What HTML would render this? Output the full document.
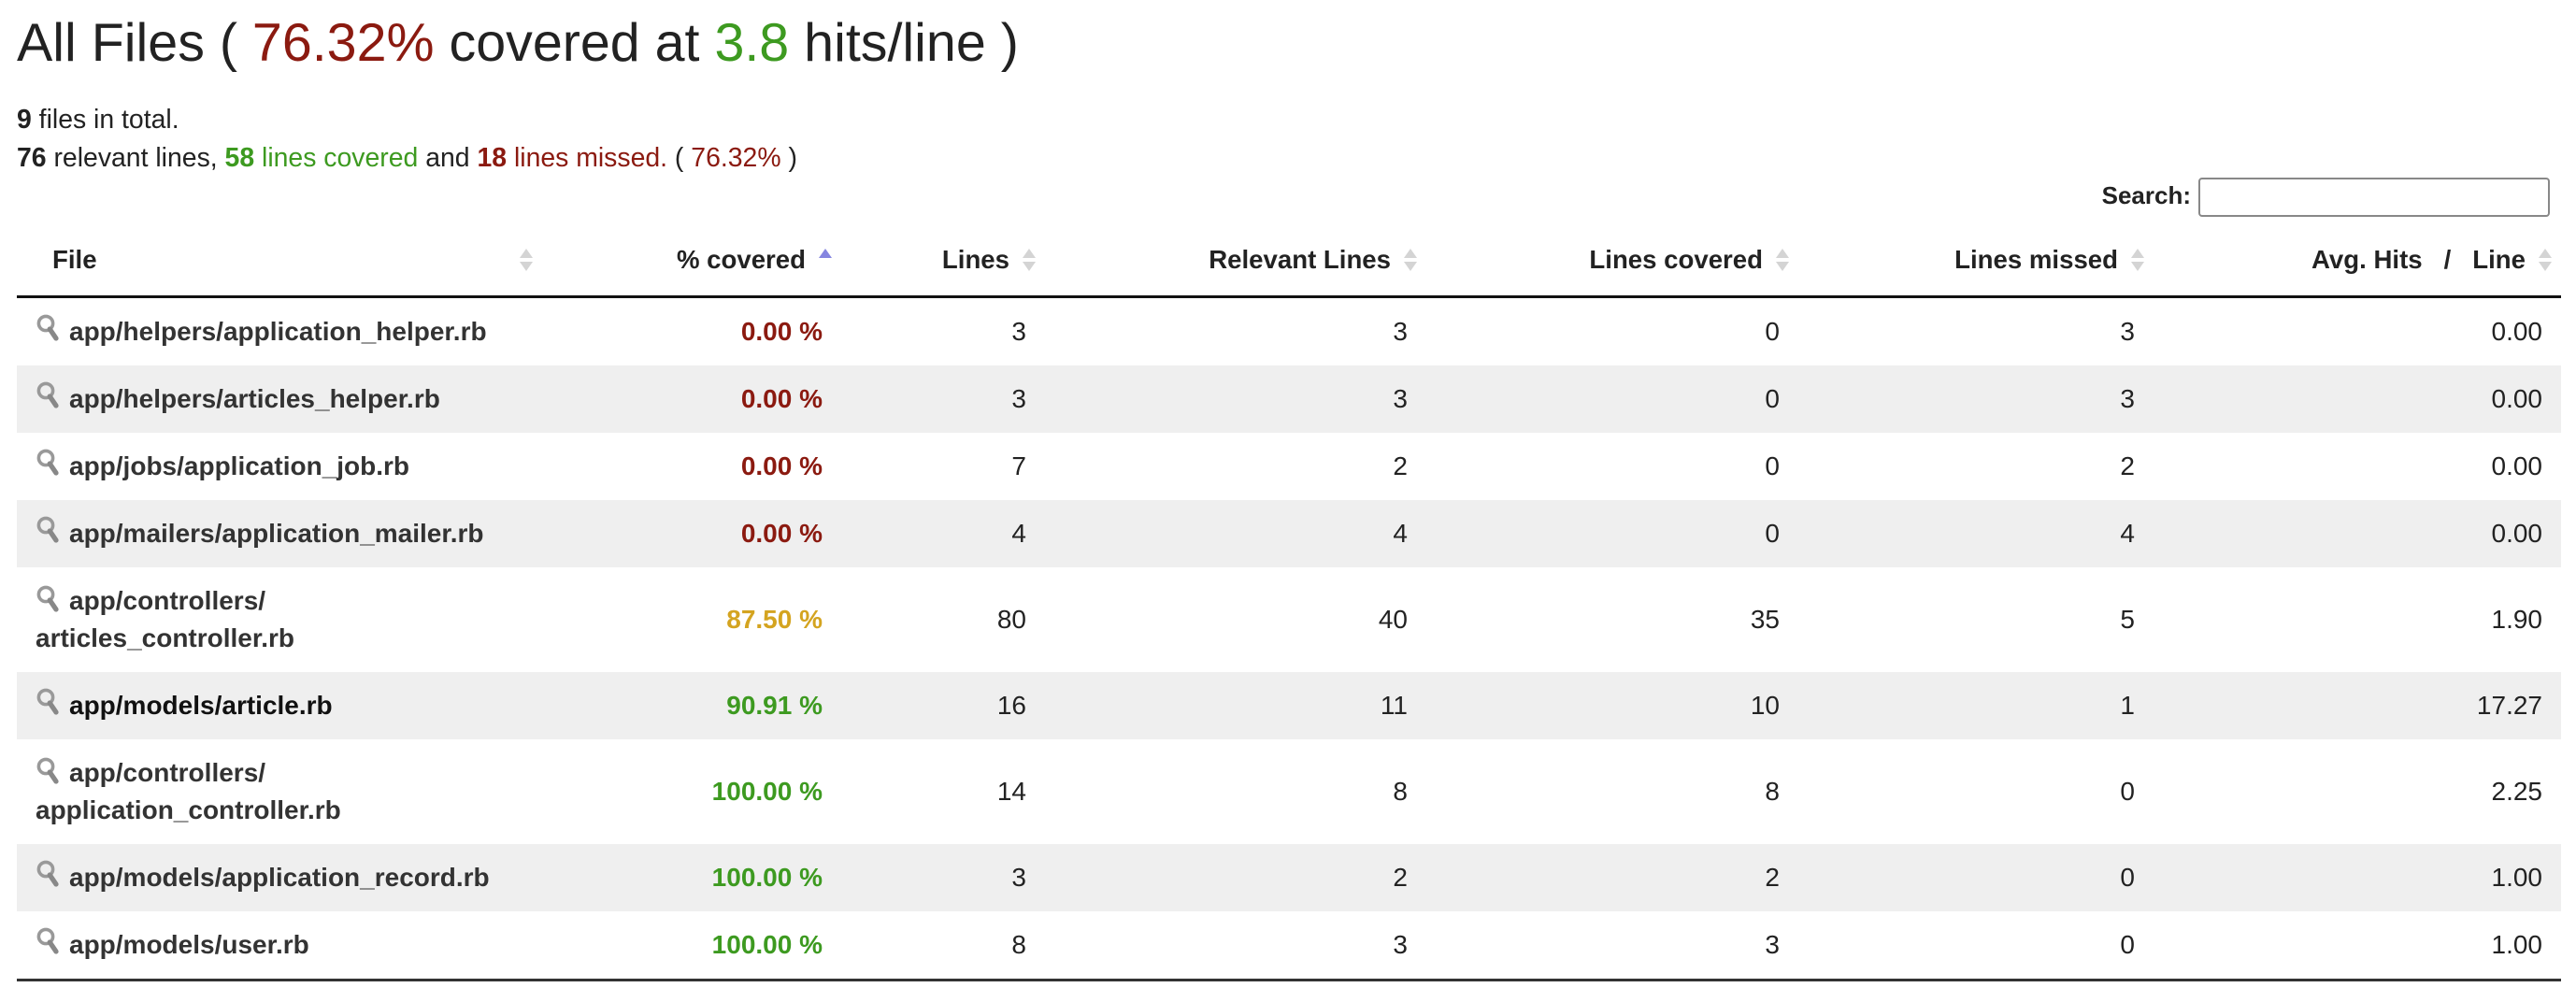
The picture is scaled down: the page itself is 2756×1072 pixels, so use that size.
<!DOCTYPE html>
<html><head><meta charset="utf-8"><style>
html{zoom:2}
body{margin:0;background:#fff;font-family:"Liberation Sans",sans-serif;color:#222;width:1378px;height:536px;position:relative;overflow:hidden}
.red{color:#8B1A10}.green{color:#3D9A20}.yel{color:#D4A420}
h2{position:absolute;left:9px;top:7px;margin:0;font-weight:normal;font-size:28.7px;line-height:32px;color:#222}
.stats{position:absolute;left:9px;top:54px;font-size:14.2px;line-height:20.5px}
.search{position:absolute;right:14px;top:95px;font-size:13px;font-weight:bold}
.search input{width:186px;height:19px;border:1px solid #888;border-radius:2px;margin-left:4px;vertical-align:middle;padding:0}
table{position:absolute;left:9px;top:120px;border-collapse:collapse;table-layout:fixed;width:1361px;font-size:14px}
th{height:38px;border-bottom:1.5px solid #111;text-align:right;padding:0 19px 0 0;position:relative;font-weight:bold;vertical-align:middle;font-size:13.8px}
th.f{text-align:left;padding-left:19px}
th .s{position:absolute;right:12px;top:13px;width:0;height:0}
th .s:before{content:"";position:absolute;left:0;top:0;border:3.5px solid transparent;border-bottom:5px solid #d4d4d4;border-top:0}
th .s:after{content:"";position:absolute;left:0;top:7px;border:3.5px solid transparent;border-top:5px solid #d4d4d4;border-bottom:0}
th .s.up:before{border-bottom-color:#8585e0}
th .s.up:after{display:none}
td{text-align:right;padding:8px 10px 8px 0;line-height:20px;vertical-align:middle}
td.f{text-align:left;padding-left:28px;font-weight:bold;position:relative;color:#333}
td.p{font-weight:bold}
tr.g td{background:#efefef}
tbody tr:last-child td{border-bottom:1.5px solid #333}
.ic{position:absolute;left:10px;width:13px;height:15px}
td.f.two .ic{top:9px}
</style></head><body>
<h2>All Files ( <span class="red">76.32%</span> covered at <span class="green">3.8</span> hits/line )</h2>
<div class="stats"><b>9</b> files in total.<br><b>76</b> relevant lines, <span class="green"><b>58</b> lines covered</span> and <span class="red"><b>18</b> lines missed.</span> ( <span class="red">76.32%</span> )</div>
<div class="search">Search:<input type="text"></div>
<svg width="0" height="0" style="position:absolute"><defs><g id="mg"><circle cx="5.5" cy="5.5" r="3.8" fill="none" stroke="#999" stroke-width="1.8"/><path d="M7.6 8.5 L11 13.5" stroke="#888" stroke-width="2.6" stroke-linecap="round"/></g></defs></svg>
<table>
<colgroup><col style="width:281px"><col style="width:160px"><col style="width:109px"><col style="width:204px"><col style="width:199px"><col style="width:190px"><col style="width:218px"></colgroup>
<thead><tr><th class="f">File<span class="s"></span></th><th>% covered<span class="s up"></span></th><th>Lines<span class="s"></span></th><th>Relevant Lines<span class="s"></span></th><th>Lines covered<span class="s"></span></th><th>Lines missed<span class="s"></span></th><th>Avg. Hits&nbsp;&nbsp; /&nbsp;&nbsp; Line<span class="s"></span></th></tr></thead>
<tbody>
<tr><td class="f"><svg class="ic" viewBox="0 0 13 15"><use href="#mg"/></svg>app/helpers/application_helper.rb</td><td class="p red">0.00 %</td><td>3</td><td>3</td><td>0</td><td>3</td><td>0.00</td></tr>
<tr class="g"><td class="f"><svg class="ic" viewBox="0 0 13 15"><use href="#mg"/></svg>app/helpers/articles_helper.rb</td><td class="p red">0.00 %</td><td>3</td><td>3</td><td>0</td><td>3</td><td>0.00</td></tr>
<tr><td class="f"><svg class="ic" viewBox="0 0 13 15"><use href="#mg"/></svg>app/jobs/application_job.rb</td><td class="p red">0.00 %</td><td>7</td><td>2</td><td>0</td><td>2</td><td>0.00</td></tr>
<tr class="g"><td class="f"><svg class="ic" viewBox="0 0 13 15"><use href="#mg"/></svg>app/mailers/application_mailer.rb</td><td class="p red">0.00 %</td><td>4</td><td>4</td><td>0</td><td>4</td><td>0.00</td></tr>
<tr><td class="f two"><svg class="ic" viewBox="0 0 13 15"><use href="#mg"/></svg>app/controllers/<br><span style="margin-left:-18px">articles_controller.rb</span></td><td class="p yel">87.50 %</td><td>80</td><td>40</td><td>35</td><td>5</td><td>1.90</td></tr>
<tr class="g"><td class="f" style="color:#111"><svg class="ic" viewBox="0 0 13 15"><use href="#mg"/></svg>app/models/article.rb</td><td class="p green">90.91 %</td><td>16</td><td>11</td><td>10</td><td>1</td><td>17.27</td></tr>
<tr><td class="f two"><svg class="ic" viewBox="0 0 13 15"><use href="#mg"/></svg>app/controllers/<br><span style="margin-left:-18px">application_controller.rb</span></td><td class="p green">100.00 %</td><td>14</td><td>8</td><td>8</td><td>0</td><td>2.25</td></tr>
<tr class="g"><td class="f"><svg class="ic" viewBox="0 0 13 15"><use href="#mg"/></svg>app/models/application_record.rb</td><td class="p green">100.00 %</td><td>3</td><td>2</td><td>2</td><td>0</td><td>1.00</td></tr>
<tr><td class="f"><svg class="ic" viewBox="0 0 13 15"><use href="#mg"/></svg>app/models/user.rb</td><td class="p green">100.00 %</td><td>8</td><td>3</td><td>3</td><td>0</td><td>1.00</td></tr>
</tbody></table>
</body></html>
